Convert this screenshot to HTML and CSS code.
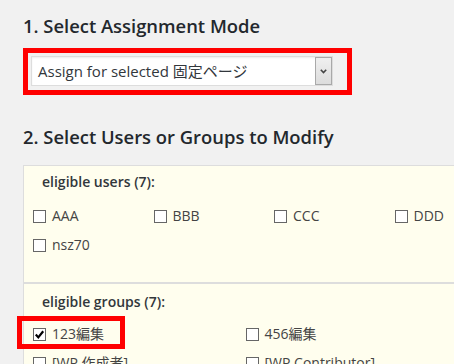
FILE: index.html
```html
<!DOCTYPE html>
<html lang="ja">
<head>
    <meta charset="UTF-8">
    <meta name="viewport" content="width=device-width, initial-scale=1.0">
    <title>Assignment Mode</title>
    <link rel="stylesheet" href="styles.css">
</head>
<body>
    <div class="page">
        <h3 class="step">1. Select Assignment Mode</h3>
        <div class="mark-box">
            <div class="fake-select">
                <span class="select-value">Assign for selected 固定ページ</span>
                <span class="select-arrow">
                    <svg width="7" height="5" viewBox="0 0 7 5"><path d="M0.8 0.8 L3.5 3.6 L6.2 0.8" fill="none" stroke="#444" stroke-width="1.6"/></svg>
                </span>
            </div>
        </div>

        <h3 class="step step-two">2. Select Users or Groups to Modify</h3>
        <div class="agents">
            <div class="agent-section">
                <div class="agent-title">eligible users (7):</div>
                <div class="agent-list user-list">
                    <label class="agent"><span class="box"></span>AAA</label>
                    <label class="agent"><span class="box"></span>BBB</label>
                    <label class="agent"><span class="box"></span>CCC</label>
                    <label class="agent"><span class="box"></span>DDD</label>
                    <label class="agent"><span class="box"></span>nsz70</label>
                </div>
            </div>
            <div class="agent-section group-section">
                <div class="agent-title">eligible groups (7):</div>
                <div class="agent-list group-list">
                    <label class="agent marked">
                        <span class="box checked">
                            <svg width="11" height="11" viewBox="0 0 11 11"><path d="M1.8 5.6 L4.3 8.4 L9.2 2.2" fill="none" stroke="#000" stroke-width="2.2"/></svg>
                        </span>123編集
                    </label>
                    <label class="agent"><span class="box"></span>456編集</label>
                    <label class="agent"><span class="box"></span>[WP 作成者]</label>
                    <label class="agent"><span class="box"></span>[WP Contributor]</label>
                </div>
            </div>
        </div>
    </div>
</body>
</html>
```

FILE: styles.css
```css
body {
    margin: 0;
    background-color: #f1f1f1;
    font-family: "Open Sans", "Noto Sans CJK JP", sans-serif;
    color: #32373c;
    overflow: hidden;
}

.page {
    padding-left: 23px;
}

.step {
    margin: 14px 0 10px;
    font-size: 18.4px;
    line-height: 24px;
    font-weight: 600;
    color: #23282d;
}

.step-two {
    margin-top: 30px;
    margin-bottom: 16px;
}

/* red annotation around the select */
.mark-box {
    width: 329px;
    box-sizing: border-box;
    border: 5px solid #ff0000;
    padding: 3px 0 4px 3px;
}

.fake-select {
    width: 302px;
    height: 30px;
    box-sizing: border-box;
    border: 1px solid #dddddd;
    background-color: #fff;
    box-shadow: inset 0 1px 2px rgba(0, 0, 0, 0.07);
    display: flex;
    align-items: center;
    justify-content: space-between;
}

.select-value {
    padding-left: 6px;
    font-size: 15px;
    line-height: 20px;
    color: #32373c;
}

.select-arrow {
    width: 17px;
    height: 28px;
    box-sizing: border-box;
    border: 1px solid #a9a9a9;
    background: linear-gradient(#f0f0f0, #dcdcdc);
    display: flex;
    align-items: center;
    justify-content: center;
}

.agents {
    width: 520px;
    border: 1px solid #dddddd;
    border-right: none;
    background-color: #fffeee;
}

.agent-section {
    padding: 7px 0 27px;
}

.group-section {
    border-top: 2px solid #dddddd;
    padding-top: 9px;
}

.agent-title {
    padding-left: 18px;
    font-size: 14px;
    line-height: 18px;
    font-weight: 600;
    color: #32373c;
    margin-bottom: 15px;
}

.group-section .agent-title {
    margin-bottom: 13px;
}

.agent-list {
    display: grid;
    row-gap: 9px;
    padding-left: 9px;
}

.user-list {
    grid-template-columns: repeat(4, 120.5px);
}

.group-list {
    grid-template-columns: repeat(2, 212.5px);
}

.agent {
    display: flex;
    align-items: center;
    gap: 6px;
    font-size: 14px;
    line-height: 20px;
    color: #444;
    position: relative;
    white-space: nowrap;
}

.box {
    width: 13px;
    height: 13px;
    box-sizing: border-box;
    border: 1px solid #666;
    background-color: #fff;
    display: flex;
    align-items: center;
    justify-content: center;
}

/* red annotation around the checked group */
.marked::after {
    content: "";
    position: absolute;
    left: -16px;
    top: -8px;
    width: 108px;
    height: 33px;
    box-sizing: border-box;
    border: 5px solid #ff0000;
}
```
